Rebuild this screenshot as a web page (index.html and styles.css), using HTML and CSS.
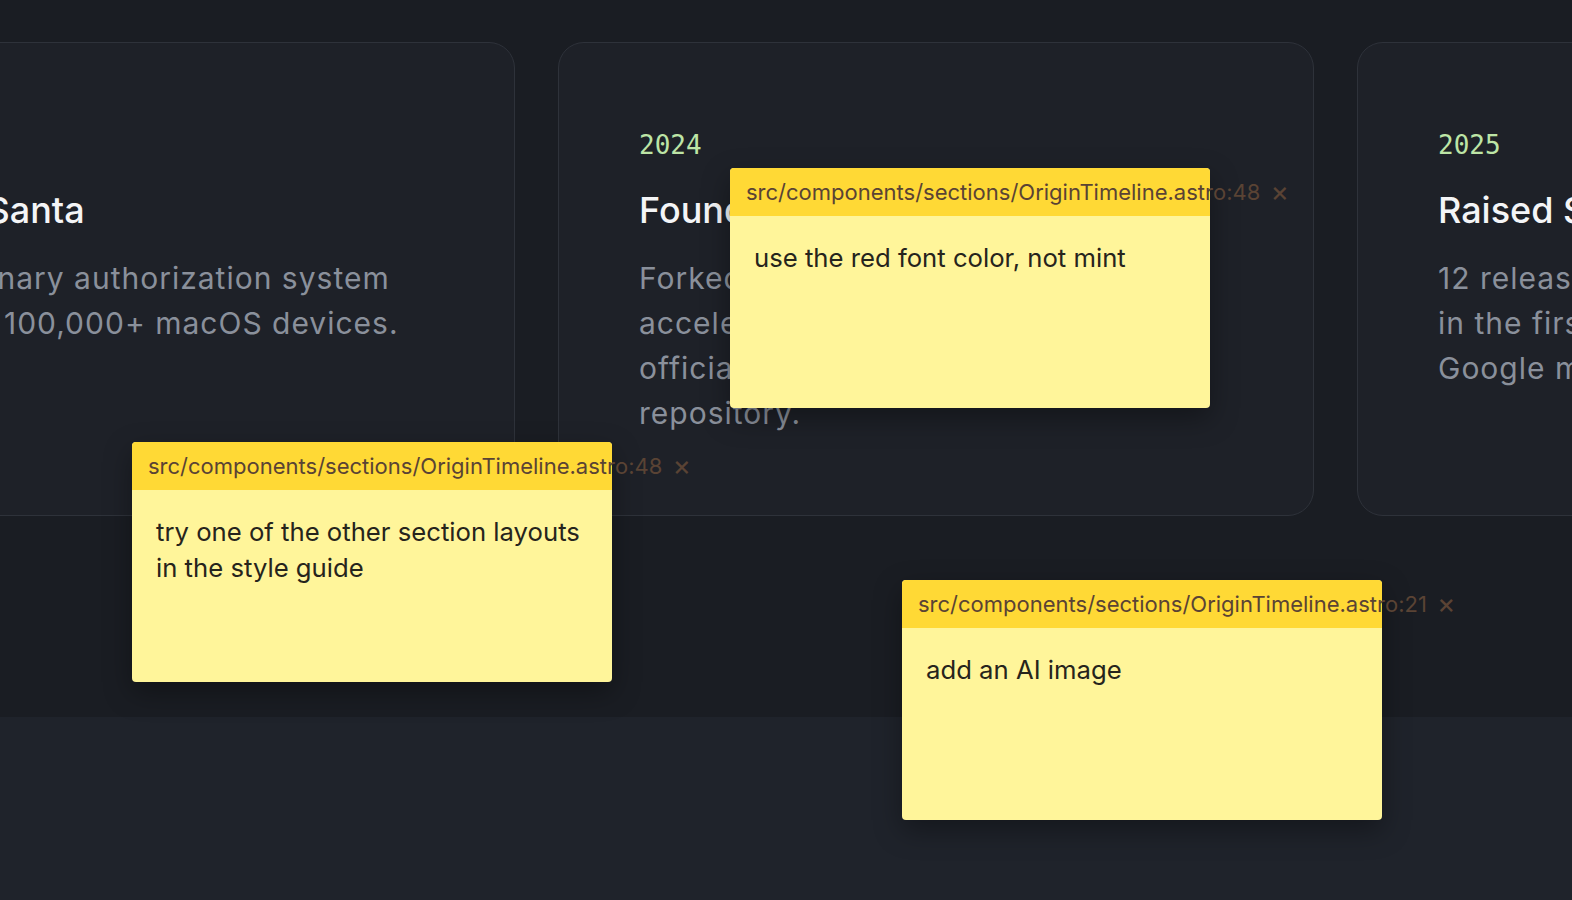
FILE: index.html
```html
<!DOCTYPE html>
<html>
<head>
  <title>Origin Timeline</title>
  <link rel="stylesheet" href="styles.css">
</head>
<body>

  <section class="timeline">
    <div class="track">
      <div class="card">
        <div class="year">2018</div>
        <h3 class="title">Created Santa</h3>
        <p class="desc">Leading binary authorization system<br>protecting 100,000+ macOS devices.</p>
      </div>
      <div class="card">
        <div class="year">2024</div>
        <h3 class="title">Founded North Pole Security</h3>
        <p class="desc">Forked Santa from Google and<br>accelerated development as the<br>official continuation of the<br>repository.</p>
      </div>
      <div class="card">
        <div class="year">2025</div>
        <h3 class="title">Raised Seed Round</h3>
        <p class="desc">12 releases shipped since the fork<br>in the first year, and Google<br>Google moved to our repository.</p>
      </div>
    </div>
  </section>

  <section class="after"></section>

  <div class="note note-a">
    <div class="note-head">src/components/sections/OriginTimeline.astro:48 <span class="close">&times;</span></div>
    <div class="note-body">use the red font color, not mint</div>
  </div>

  <div class="note note-b">
    <div class="note-head">src/components/sections/OriginTimeline.astro:48 <span class="close">&times;</span></div>
    <div class="note-body">try one of the other section layouts in the style guide</div>
  </div>

  <div class="note note-c">
    <div class="note-head">src/components/sections/OriginTimeline.astro:21 <span class="close">&times;</span></div>
    <div class="note-body">add an AI image</div>
  </div>

</body>
</html>
```

FILE: styles.css
```css
body {
  margin: 0;
  background: #1f232b;
  font-family: Inter, "Noto Sans", sans-serif;
  overflow: hidden;
}
.timeline {
  height: 717px;
  background: #1a1d23;
  overflow: hidden;
}
.track {
  display: flex;
  gap: 43px;
  padding-top: 42px;
  margin-left: -241px;
}
.card {
  flex: 0 0 756px;
  box-sizing: border-box;
  height: 474px;
  padding: 84px 80px;
  background: #1e2128;
  border: 1px solid #2e323a;
  border-radius: 26px;
}
.year {
  font-family: "DejaVu Sans Mono", monospace;
  font-size: 26px;
  line-height: 36px;
  color: #bde5a6;
}
.title {
  margin: 25px 0 0;
  font-size: 36px;
  line-height: 44px;
  font-weight: 500;
  color: #f4f5f7;
  white-space: nowrap;
}
.desc {
  margin: 24px 0 0;
  font-size: 30px;
  line-height: 45px;
  letter-spacing: 1px;
  color: #8a909b;
  white-space: nowrap;
}
.after {
  height: 183px;
}
.note {
  position: absolute;
  width: 480px;
  height: 240px;
  background: #fff59a;
  border-radius: 4px;
  box-shadow: 0 10px 28px rgba(0, 0, 0, 0.35);
}
.note-a {
  left: 730px;
  top: 168px;
}
.note-b {
  left: 132px;
  top: 442px;
}
.note-c {
  left: 902px;
  top: 580px;
}
.note-head {
  height: 48px;
  padding: 0 16px;
  line-height: 47px;
  font-size: 22px;
  color: #5a4334;
  background: #ffd935;
  border-radius: 4px 4px 0 0;
  white-space: nowrap;
}
.close {
  margin-left: 4px;
  font-size: 28px;
  vertical-align: -1px;
}
.note-body {
  padding: 24px;
  font-size: 25.7px;
  line-height: 36px;
  color: #26241c;
}
```
